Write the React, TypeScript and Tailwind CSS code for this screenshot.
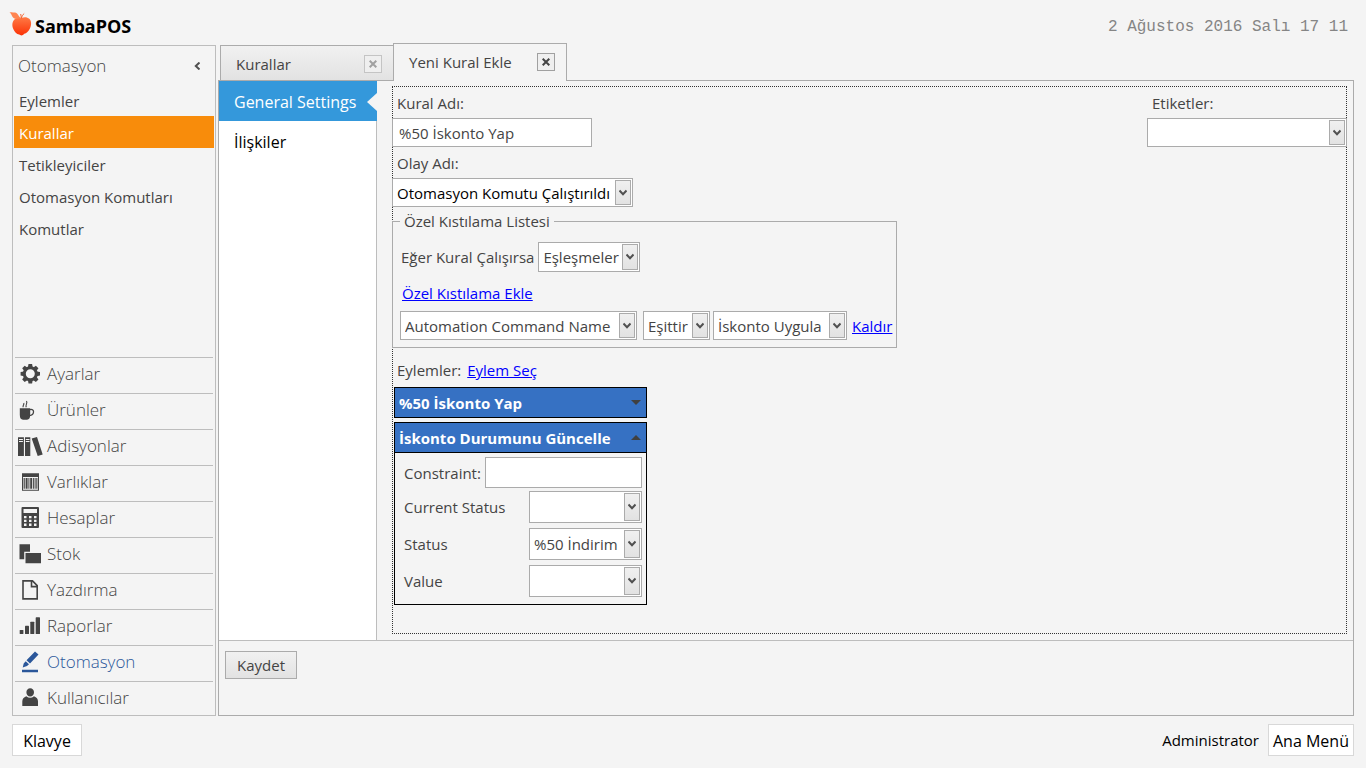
import { useId, type ReactNode } from 'react'
import clsx from 'clsx'

const SECTIONS: { name: string; icon: ReactNode; current?: boolean }[] = [
  {
    name: 'Ayarlar',
    icon: (
      <g>
        <circle cx="12.3" cy="10.8" r="6" fill="none" stroke="currentColor" strokeWidth="3" />
        {[0, 45, 90, 135, 180, 225, 270, 315].map((a) => (
          <path key={a} d="M9.900 4.600 10.500 1.100h3.600l.6 3.500z" transform={`rotate(${a} 12.3 10.8)`} />
        ))}
      </g>
    ),
  },
  {
    name: 'Ürünler',
    icon: (
      <g>
        <path d="M1.800 9.300h10.400v6.500q0 4.900-3.200 4.900H5q-3.200 0-3.200-4.900z" />
        <path d="M12 10.600c5-1.200 4.600 5.600-.6 6" fill="none" stroke="currentColor" strokeWidth="1.300" />
        <path d="M5.300 8.300c-1.200-1.800 1.400-2.400.4-4.300M8.300 8.300C6.800 6 10 4.800 8.500 2" fill="none" stroke="currentColor" strokeWidth="1.100" />
      </g>
    ),
  },
  {
    name: 'Adisyonlar',
    icon: (
      <path
        fillRule="evenodd"
        d="M0 2.300h5.900V21H0zM1 4v.9h3.900V4zM1 6.100V7h3.900v-.9zM7 2.300h5.300V21H7zM7.800 4v.9h3.700V4zM7.800 6.100V7h3.700v-.9zM13.700 3.500l5.300-1.500L24.700 19.500l-5 1.500z"
      />
    ),
  },
  {
    name: 'Varlıklar',
    icon: (
      <path
        fillRule="evenodd"
        d="M4 2.300h17v17.400H4zM5 6v12.700h15V6zM5.600 7h1.200v10.800H5.600zM7.600 7h2v10.800h-2zM10.400 7h1v10.800h-1zM12.200 7h2v10.800h-2zM15 7h.9v10.800H15zM16.600 7h1v10.800h-1zM18.300 7h1.100v10.800h-1.100z"
      />
    ),
  },
  {
    name: 'Hesaplar',
    icon: (
      <path
        fillRule="evenodd"
        d="M4.500 0h15.500q1 0 1 1v19q0 1-1 1H4.500q-1 0-1-1V1q0-1 1-1zM5.500 2v4h13.500V2zM6 9v2.300h2.500V9zM11 9v2.300h2.500V9zM16 9v2.300h2.500V9zM6 12.800v2.300h2.500v-2.300zM11 12.800v2.300h2.500v-2.300zM16 12.800v2.300h2.500v-2.300zM6 16.600v2.300h2.500v-2.300zM11 16.600v2.300h2.500v-2.300zM16 16.600v2.300h2.500v-2.300z"
      />
    ),
  },
  {
    name: 'Stok',
    icon: <path d="M1.500 1.300H12V8.700H6.200V16.300H1.500zM7.500 10H23v10.300H7.500z" />,
  },
  {
    name: 'Yazdırma',
    icon: (
      <path
        d="M5 1.900h9.500l4.700 4.700V19.900H5zM13.500 2v5.600H19"
        fill="none"
        stroke="currentColor"
        strokeWidth="1.600"
      />
    ),
  },
  {
    name: 'Raporlar',
    icon: (
      <g>
        <rect x="1.700" y="15" width="3.700" height="4" rx=".6" />
        <rect x="7" y="10.700" width="4" height="8.300" rx=".6" />
        <rect x="12.300" y="6.700" width="4" height="12.300" rx=".6" />
        <rect x="17.700" y="2.300" width="4.300" height="16.700" rx=".6" />
      </g>
    ),
  },
  {
    name: 'Otomasyon',
    current: true,
    icon: <path d="M17 .5 20.500 3.500 12 12.500 8.500 9.300zM7.700 10.200l3.300 3-2 1.800-4.300 1.500 1-4zM4 18.800h16v2.500H4z" />,
  },
  {
    name: 'Kullanıcılar',
    icon: (
      <path d="M12.200 1.200a3.800 3.800 0 0 1 3.800 4c0 2.300-1.500 4.300-3.800 4.300S8.400 7.500 8.400 5.200a3.800 3.800 0 0 1 3.800-4zM4.300 19v-4.500q0-3.700 4-5.300 3.900 3.300 7.700 0 4 1.600 4 5.300V19z" />
    ),
  },
]

const PAGES = ['Eylemler', 'Kurallar', 'Tetikleyiciler', 'Otomasyon Komutları', 'Komutlar']

function Logo() {
  return (
    <svg viewBox="0 0 24 24" className="size-6" aria-hidden="true">
      <defs>
        <linearGradient id="fruit" x1="0" y1="0" x2="0" y2="1">
          <stop offset="0" stopColor="#ff7a45" />
          <stop offset="1" stopColor="#fb3206" />
        </linearGradient>
      </defs>
      <path
        fill="url(#fruit)"
        d="M12.500 6c2.500-1.300 5.800-1.200 7.800.8 2.400 2.400 2.200 6.400.6 9.700-1.400 2.900-3.300 5-5.700 5.300-1.400 2-3.600 2-5 .8-2.600-.4-4.700-2.600-5.900-5.500C2.900 13.500 3 9.700 5.400 7.400 7.500 5.400 10.200 5.200 12.500 6z"
      />
      <path fill="#ff8450" d="M.5 0c3.200.8 6.200-.2 8 2 1 1.300 1.500 2.800 3.500 4.600C9.500 6 7.500 7.200 5.500 6.500 2.800 5.300 2.800 2 .5 0z" />
      <path fill="none" stroke="#f4632f" strokeWidth="1" d="M12.500 6.500c-.3-1.500-.5-3.200-.8-4.500M12.500 6c.4-1.800 1.200-3.200 2.700-4.500" />
    </svg>
  )
}

function Chevron({ className }: { className?: string }) {
  return (
    <svg viewBox="0 0 8 8" className={clsx('size-2', className)} aria-hidden="true">
      <path d="M.5 1.500 4 5.200l3.500-3.700" fill="none" stroke="#505050" strokeWidth="2" />
    </svg>
  )
}

function Combo({
  label,
  value = '',
  className,
  dark,
  id,
}: {
  label?: string
  value?: string
  className: string
  dark?: boolean
  id?: string
}) {
  return (
    <span className={clsx('grid border border-[#ababab] bg-white pr-px', className)}>
      <select
        id={id}
        aria-label={label}
        defaultValue={value}
        className={clsx(
          'col-start-1 row-start-1 w-full min-w-0 appearance-none bg-transparent pl-1 outline-none',
          dark ? 'text-black' : 'text-[#444]',
        )}
      >
        <option value={value}>{value}</option>
      </select>
      <span className="pointer-events-none col-start-1 row-start-1 my-px flex w-4 items-center justify-center justify-self-end border border-[#ababab] bg-linear-to-b from-[#f0f0f0] to-[#e2e2e2]">
        <Chevron />
      </span>
    </span>
  )
}

function CloseButton({ name, active }: { name: string; active?: boolean }) {
  return (
    <button
      type="button"
      aria-label={`${name} kapat`}
      className={clsx(
        'flex size-[18px] items-center justify-center border bg-[#efefef]',
        active ? 'border-[#a0a0a0] text-[#444]' : 'border-[#c4c4c4] text-[#a0a0a0]',
      )}
    >
      <svg viewBox="0 0 8 8" className="size-2" aria-hidden="true">
        <path d="M.7.7l6.600 6.600M7.300.7.7 7.300" fill="none" stroke="currentColor" strokeWidth="2" />
      </svg>
    </button>
  )
}

function Sidebar() {
  return (
    <aside className="mt-0.5 flex w-[204px] shrink-0 flex-col border border-[#bdbdbd]">
      <div className="flex h-[38px] items-center justify-between pt-0.5 pr-3.5 pl-[5px]">
        <h2 className="text-[17px] font-light text-[#444]">Otomasyon</h2>
        <button type="button" aria-label="Daralt">
          <Chevron className="rotate-90" />
        </button>
      </div>
      <nav className="px-px">
        {PAGES.map((page) => (
          <a
            key={page}
            href="#"
            className={clsx(
              'flex h-8 items-center pt-0.5 pl-[5px]',
              page === 'Kurallar' ? 'bg-[#f88c0b] text-white' : 'text-[#444]',
            )}
          >
            {page}
          </a>
        ))}
      </nav>
      <nav className="mt-auto px-0.5">
        {SECTIONS.map((section) => (
          <a
            key={section.name}
            href="#"
            className={clsx(
              'flex h-9 gap-[5px] border-t border-[#bdbdbd] pt-[5px] pl-[3px] text-[17px] leading-[22px] font-light last:h-[34px]',
              section.current ? 'text-[#2b579a]' : 'text-[#444]',
            )}
          >
            <svg viewBox="0 0 24 24" fill="currentColor" className="size-6 shrink-0 overflow-visible" aria-hidden="true">
              {section.icon}
            </svg>
            {section.name}
          </a>
        ))}
      </nav>
    </aside>
  )
}

function ActionRow({ label, value }: { label: string; value?: string }) {
  const id = useId()
  return (
    <div className="flex items-center justify-between">
      <label htmlFor={id}>{label}</label>
      <Combo id={id} value={value} className="h-8 w-[113px]" />
    </div>
  )
}

function ActionHeader({ title, open }: { title: string; open?: boolean }) {
  return (
    <button
      type="button"
      aria-expanded={!!open}
      className="flex h-[31px] w-full items-center justify-between border border-black bg-[#3671c3] pr-[5px] pl-1 font-bold text-white"
    >
      {title}
      <svg viewBox="0 0 10 5" className="h-[5px] w-2.5" aria-hidden="true">
        <path d={open ? 'M0 5 5 0l5 5z' : 'M0 0h10L5 5z'} fill="#404040" />
      </svg>
    </button>
  )
}

function RuleForm() {
  return (
    <form className="mt-[5px] mr-1.5 mb-1.5 ml-[15px] flex grow items-start justify-between border border-dotted border-[#333]">
      <div className="-ml-px flex flex-col items-start">
        <label htmlFor="rule-name" className="mt-1.5 ml-[5px]">Kural Adı:</label>
        <input
          id="rule-name"
          type="text"
          defaultValue="%50 İskonto Yap"
          className="mt-[5px] h-[29px] w-[200px] border border-[#ababab] bg-white px-1.5 outline-none"
        />
        <label htmlFor="event-name" className="mt-1.5 ml-[5px]">Olay Adı:</label>
        <Combo id="event-name" dark value="Otomasyon Komutu Çalıştırıldı" className="mt-[5px] h-[29px] w-[241px]" />
        <fieldset className="mt-1 flex w-[505px] flex-col items-start border border-[#ababab] pr-1 pb-[7px] pl-[7px]">
          <legend className="px-1">Özel Kıstılama Listesi</legend>
          <div className="mt-[11px] flex items-center gap-1">
            <label htmlFor="rule-match" className="pl-px">Eğer Kural Çalışırsa</label>
            <Combo id="rule-match" value="Eşleşmeler" className="h-[30px] w-[102px]" />
          </div>
          <a href="#" className="mt-[11px] ml-0.5 text-[#0000ff] underline">Özel Kıstılama Ekle</a>
          <div className="mt-2 flex items-center">
            <Combo label="Alan" value="Automation Command Name" className="h-[29px] w-[237px]" />
            <Combo label="Koşul" value="Eşittir" className="ml-1.5 h-[29px] w-[67px]" />
            <Combo label="Değer" value="İskonto Uygula" className="ml-[3px] h-[29px] w-[134px]" />
            <a href="#" className="ml-[5px] text-[#0000ff] underline">Kaldır</a>
          </div>
        </fieldset>
        <div className="mt-3 ml-[5px] flex gap-1.5">
          Eylemler:
          <a href="#" className="text-[#0000ff] underline">Eylem Seç</a>
        </div>
        <div className="mt-[7px] ml-0.5 flex w-[253px] flex-col gap-1">
          <ActionHeader title="%50 İskonto Yap" />
          <div>
            <ActionHeader open title="İskonto Durumunu Güncelle" />
            <div className="flex flex-col gap-[5px] border border-t-0 border-black pt-1 pr-1 pb-[7px] pl-[9px]">
              <div className="-mb-0.5 flex items-center justify-between">
                <label htmlFor="constraint">Constraint:</label>
                <input id="constraint" type="text" className="h-[31px] w-[157px] border border-[#ababab] bg-white px-1 outline-none" />
              </div>
              <ActionRow label="Current Status" />
              <ActionRow label="Status" value="%50 İndirim" />
              <ActionRow label="Value" />
            </div>
          </div>
        </div>
      </div>
      <div className="-mr-px flex flex-col">
        <label htmlFor="tags" className="mt-1.5 ml-[5px]">Etiketler:</label>
        <Combo id="tags" className="mt-[5px] h-[29px] w-[200px]" />
      </div>
    </form>
  )
}

export default function App() {
  return (
    <div className="flex min-h-screen flex-col bg-[#f4f4f4] px-3 pb-3 font-['Open_Sans','Noto_Sans',sans-serif] text-[15px] leading-5 text-[#444]">
      <header className="flex h-[43px] items-center justify-between pt-1.5 pr-1.5">
        <div className="-ml-[3px] flex items-start gap-0.5">
          <Logo />
          <h1 className="pt-0.5 text-lg leading-6 font-bold text-black">SambaPOS</h1>
        </div>
        <time className="pt-1 font-['Liberation_Mono',monospace] text-base text-[#858585]">2 Ağustos 2016 Salı 17 11</time>
      </header>

      <div className="flex grow gap-0.5">
        <Sidebar />
        <main className="flex grow flex-col">
          <div className="relative -mb-px flex items-end pl-0.5">
            <div className="flex h-9 w-[173px] items-center justify-between border border-r-0 border-[#ababab] bg-linear-to-b from-[#f1f1f1] to-[#e2e2e2] pt-0.5 pr-[11px] pl-[15px]">
              <button type="button">Kurallar</button>
              <CloseButton name="Kurallar" />
            </div>
            <div className="flex h-[38px] w-[174px] items-center justify-between border border-b-0 border-[#ababab] bg-[#f4f4f4] pr-[11px] pb-px pl-[15px]">
              <button type="button">Yeni Kural Ekle</button>
              <CloseButton name="Yeni Kural Ekle" active />
            </div>
          </div>

          <div className="flex grow flex-col border border-[#ababab]">
            <div className="flex grow">
              <nav className="w-[158px] shrink-0 border-r border-[#bdbdbd] bg-white text-base">
                <a href="#" className="-mr-px flex h-10 items-center justify-between bg-[#3498db] pt-0.5 pl-[15px] text-white">
                  General Settings
                  <svg viewBox="0 0 10 18" className="h-[18px] w-2.5" aria-hidden="true">
                    <path d="M10 0 0 9l10 9z" fill="#f4f4f4" />
                  </svg>
                </a>
                <a href="#" className="flex h-10 items-center pt-0.5 pl-[15px] text-black">İlişkiler</a>
              </nav>
              <RuleForm />
            </div>
            <div className="h-[75px] border-t border-[#bdbdbd] px-1.5 pt-2.5">
              <button
                type="button"
                className="h-7 w-[72px] border border-[#ababab] bg-linear-to-b from-[#f1f1f1] to-[#e2e2e2]"
              >
                Kaydet
              </button>
            </div>
          </div>
        </main>
      </div>

      <footer className="mt-2 flex items-center justify-between text-black">
        <button type="button" className="h-8 w-[70px] border border-[#d8d8d8] bg-white pt-0.5 text-base">Klavye</button>
        <div className="flex items-center gap-[9px]">
          <span>Administrator</span>
          <button type="button" className="h-8 w-[86px] border border-[#d8d8d8] bg-white pt-0.5 text-base">Ana Menü</button>
        </div>
      </footer>
    </div>
  )
}
